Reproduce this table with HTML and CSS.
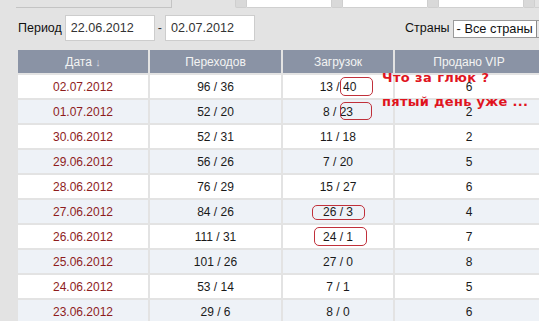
FILE: index.html
```html
<!DOCTYPE html>
<html lang="ru">
<head>
<meta charset="utf-8">
<title>Статистика</title>
<link rel="stylesheet" href="styles.css">
</head>
<body>
<div class="page">
  <div class="tabs">
    <div class="tab-left"></div>
    <div class="tab-knob"></div><div class="tab-white"></div>
    <div class="tab-knob"></div><div class="tab-white"></div>
    <div class="tab-knob"></div><div class="tab-white"></div>
    <div class="tab-knob"></div><div class="tab-rest"></div>
  </div>

  <div class="filters">
    <span class="label">Период</span>
    <div class="input">22.06.2012</div>
    <span class="dash">-</span>
    <div class="input">02.07.2012</div>
    <span class="label countries">Страны</span>
    <div class="select"><span class="select-text">- Все страны</span><span class="select-btn"></span></div>
  </div>

  <div class="table-wrap">
    <table class="stats">
      <colgroup>
        <col class="c1"><col class="c2"><col class="c3"><col class="c4">
      </colgroup>
      <thead>
        <tr><th>Дата <span class="arrow">↓</span></th><th>Переходов</th><th>Загрузок</th><th>Продано VIP</th></tr>
      </thead>
      <tbody>
        <tr><td class="date">02.07.2012</td><td>96 / 36</td><td>13 / 40</td><td>6</td></tr>
        <tr><td class="date">01.07.2012</td><td>52 / 20</td><td>8 / 23</td><td>2</td></tr>
        <tr><td class="date">30.06.2012</td><td>52 / 31</td><td>11 / 18</td><td>2</td></tr>
        <tr><td class="date">29.06.2012</td><td>56 / 26</td><td>7 / 20</td><td>5</td></tr>
        <tr><td class="date">28.06.2012</td><td>76 / 29</td><td>15 / 27</td><td>6</td></tr>
        <tr><td class="date">27.06.2012</td><td>84 / 26</td><td>26 / 3</td><td>4</td></tr>
        <tr><td class="date">26.06.2012</td><td>111 / 31</td><td>24 / 1</td><td>7</td></tr>
        <tr><td class="date">25.06.2012</td><td>101 / 26</td><td>27 / 0</td><td>8</td></tr>
        <tr><td class="date">24.06.2012</td><td>53 / 14</td><td>7 / 1</td><td>5</td></tr>
        <tr><td class="date">23.06.2012</td><td>29 / 6</td><td>8 / 0</td><td>6</td></tr>
      </tbody>
    </table>
  </div>

  <div class="mark m1"></div>
  <div class="mark m2"></div>
  <div class="mark m3"></div>
  <div class="mark m4"></div>
  <div class="note n1">Что за глюк ?</div>
  <div class="note n2">пятый день уже ...</div>
</div>
</body>
</html>
```
FILE: styles.css
```css
html, body {
  margin: 0;
  padding: 0;
  overflow: hidden;
  background: #e3e3e3;
}
.page {
  position: relative;
  width: 539px;
  height: 321px;
  overflow: hidden;
  font-family: "Liberation Sans", Arial, sans-serif;
  color: #1a1a1a;
}
.tabs {
  display: flex;
  height: 8px;
}
.tabs > div {
  flex-shrink: 0;
}
.tab-left {
  margin-left: 16px;
  width: 155px;
  height: 7px;
  border-right: 1px solid #c4c4c4;
  border-bottom: 1px solid #c4c4c4;
}
.tab-knob {
  width: 10px;
  height: 7px;
  background: #d9d9d9;
  border: 1px solid #cfcfcf;
  border-top: 0;
  border-radius: 0 0 2px 2px;
}
.tab-left + .tab-knob {
  margin-left: 63px;
}
.tab-white {
  width: 84px;
  height: 7px;
  background: #ffffff;
  border-bottom: 1px solid #d0d0d0;
}
.tabs > .tab-rest {
  flex: 1 0 auto;
  height: 7px;
  border-bottom: 1px solid #d0d0d0;
}
.filters {
  display: flex;
  align-items: center;
  margin-top: 7px;
  padding-left: 18px;
  height: 26px;
  font-size: 12.5px;
  white-space: nowrap;
}
.filters > * {
  flex-shrink: 0;
}
.label {
  color: #111;
}
.input {
  margin-left: 3px;
  width: 83px;
  height: 24px;
  line-height: 24px;
  padding-left: 5px;
  background: #fff;
  border: 1px solid #cdcdcd;
  font-size: 12.6px;
  color: #333;
}
.dash {
  margin: 0 3px 0 3px;
  color: #333;
}
.input + .dash + .input {
  margin-left: 0;
}
.countries {
  margin-left: 150px;
}
.select {
  display: flex;
  margin-left: 3px;
  height: 16px;
  margin-top: 2px;
  background: #fff;
  border: 1px solid #9a9a9a;
  border-right: 0;
}
.select-text {
  width: 79px;
  padding-left: 3px;
  line-height: 16px;
  font-size: 12.8px;
  color: #111;
}
.select-btn {
  width: 16px;
  background: #e8e8e8;
  border-left: 1px solid #8a8a8a;
}
.table-wrap {
  margin-top: 7px;
  margin-left: 16px;
}
.stats {
  border-collapse: separate;
  border-spacing: 2px;
  table-layout: fixed;
  width: 529px;
  font-size: 12px;
}
.c1 { width: 130px; }
.c2 { width: 131px; }
.c3 { width: 110px; }
.c4 { width: 148px; }
.stats th {
  height: 23px;
  padding: 0;
  background: #8a93a5;
  color: #f3f3f3;
  font-weight: normal;
  text-align: center;
}
.arrow {
  color: #d8dce4;
  font-size: 11px;
}
.stats td {
  height: 23px;
  padding: 0;
  text-align: center;
  background: #ffffff;
}
.stats tbody tr:nth-child(even) td {
  background: #eef2f7;
}
.stats td.date {
  color: #8e1c1c;
}
.mark {
  position: absolute;
  border: 1px solid #c0303a;
  border-radius: 5px;
}
.m1 { left: 340px; top: 77px; width: 31px; height: 17px; }
.m2 { left: 340px; top: 102px; width: 30px; height: 16px; }
.m3 { left: 312px; top: 205px; width: 51px; height: 13px; }
.m4 { left: 314px; top: 227px; width: 51px; height: 17px; }
.note {
  position: absolute;
  left: 382px;
  font-family: "DejaVu Sans", sans-serif;
  font-weight: bold;
  font-size: 13px;
  color: #e0141e;
  white-space: nowrap;
}
.n1 { top: 70px; letter-spacing: 0.4px; }
.n2 { top: 94px; letter-spacing: 0.3px; }
```
